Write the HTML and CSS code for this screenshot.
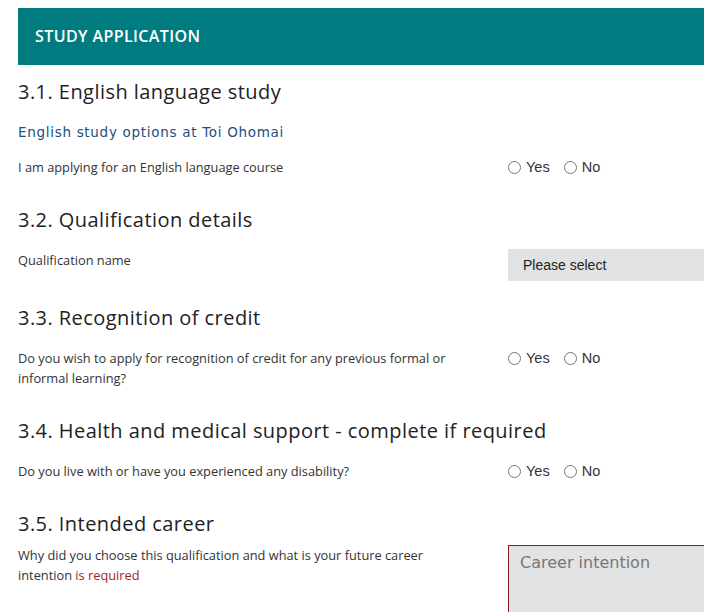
FILE: index.html
```html
<!DOCTYPE html>
<html>
<head>
<meta charset="utf-8">
<link rel="stylesheet" href="styles.css">
</head>
<body>
<div class="page">
  <div class="banner">STUDY APPLICATION</div>

  <section class="sec sec1">
    <h2>3.1. English language study</h2>
    <a class="link" href="#">English study options at Toi Ohomai</a>
    <div class="row">
      <div class="label">I am applying for an English language course</div>
      <div class="field radios">
        <label class="opt"><span class="circle"></span>Yes</label>
        <label class="opt"><span class="circle"></span>No</label>
      </div>
    </div>
  </section>

  <section class="sec sec2">
    <h2>3.2. Qualification details</h2>
    <div class="row">
      <div class="label pad1">Qualification name</div>
      <div class="field"><div class="select">Please select</div></div>
    </div>
  </section>

  <section class="sec sec3">
    <h2>3.3. Recognition of credit</h2>
    <div class="row">
      <div class="label">Do you wish to apply for recognition of credit for any previous formal or informal learning?</div>
      <div class="field radios">
        <label class="opt"><span class="circle"></span>Yes</label>
        <label class="opt"><span class="circle"></span>No</label>
      </div>
    </div>
  </section>

  <section class="sec sec4">
    <h2>3.4. Health and medical support - complete if required</h2>
    <div class="row">
      <div class="label">Do you live with or have you experienced any disability?</div>
      <div class="field radios">
        <label class="opt"><span class="circle"></span>Yes</label>
        <label class="opt"><span class="circle"></span>No</label>
      </div>
    </div>
  </section>

  <section class="sec sec5">
    <h2>3.5. Intended career</h2>
    <div class="row">
      <div class="label">Why did you choose this qualification and what is your future career intention <span class="req">is required</span></div>
      <div class="field"><div class="textarea">Career intention</div></div>
    </div>
  </section>
</div>
</body>
</html>
```

FILE: styles.css
```css
html, body {
  margin: 0;
  padding: 0;
  background: #ffffff;
}
body {
  font-family: "Open Sans", "Noto Sans", sans-serif;
  color: #333333;
  overflow: hidden;
}
.page {
  padding: 8px 0 0 18px;
}
.banner {
  background: #007c80;
  color: #ffffff;
  height: 57px;
  line-height: 57px;
  padding-left: 17px;
  font-size: 16px;
  font-weight: 600;
  letter-spacing: 0.4px;
}
.sec h2 {
  margin: 0;
  font-size: 20px;
  line-height: 28px;
  font-weight: 400;
  color: #222222;
  letter-spacing: 0.45px;
}
.sec1 { margin-top: 13px; }
.sec2 { margin-top: 29px; }
.sec3 { margin-top: 23px; }
.sec4 { margin-top: 29px; }
.sec5 { margin-top: 29px; }
.link {
  display: block;
  margin-top: 16px;
  font-family: "DejaVu Sans", "Open Sans", sans-serif;
  font-size: 13.5px;
  line-height: 20px;
  letter-spacing: 0.7px;
  color: #1d4f7c;
  text-decoration: none;
}
.row {
  display: flex;
  align-items: flex-start;
  margin-top: 15px;
}
.sec3 .row, .sec4 .row { margin-top: 16px; }
.sec5 .row { margin-top: 7px; }
.label {
  width: 460px;
  margin-right: 30px;
  font-size: 12.8px;
  line-height: 20px;
  color: #333333;
}
.pad1 { padding-top: 1px; }
.req { color: #a11d1d; }
.field {
  flex: 1;
}
.radios {
  display: flex;
  gap: 14px;
  font-family: "Liberation Sans", Arial, sans-serif;
  font-size: 14.5px;
  line-height: 20px;
  color: #333333;
}
.opt {
  display: flex;
  align-items: center;
}
.circle {
  width: 11px;
  height: 11px;
  border: 1px solid #767676;
  border-radius: 50%;
  margin-right: 5px;
  background: #ffffff;
}
.select {
  background: #e1e2e3;
  height: 32px;
  line-height: 32px;
  padding-left: 15px;
  font-family: "Liberation Sans", Arial, sans-serif;
  font-size: 14px;
  color: #222222;
}
.textarea {
  background: #e2e3e4;
  border: 1px solid #8c1c1c;
  border-right: none;
  height: 80px;
  padding: 6px 0 0 11px;
  font-family: "DejaVu Sans", "Open Sans", sans-serif;
  font-size: 16px;
  line-height: 22px;
  color: #777777;
}
```
